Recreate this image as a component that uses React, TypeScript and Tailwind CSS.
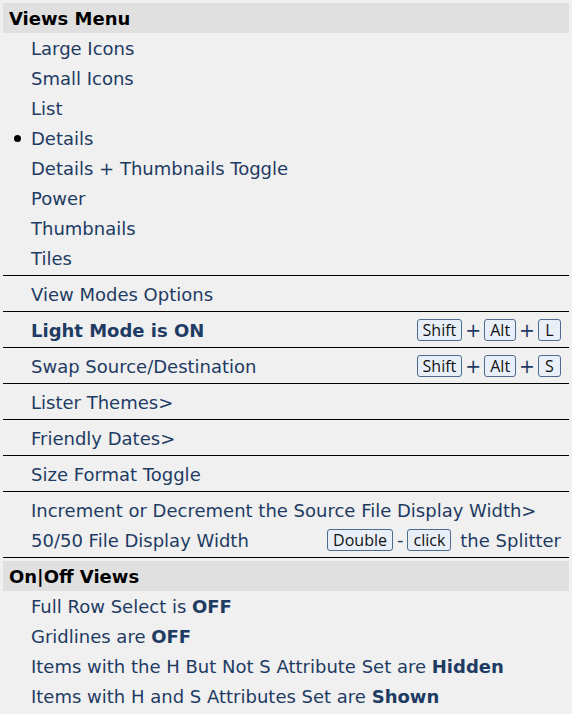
import React from "react";

const text = "text-[#1e3b63]";

function Kbd({ children }: { children: React.ReactNode }) {
  return (
    <span className="inline-flex h-[22px] min-w-[23px] items-center justify-center rounded-[3px] border border-[#4d6b8c] bg-[#e9eff8] px-[5px] text-[16px] leading-none text-[#111] [font-family:'Open_Sans','Noto_Sans',sans-serif]">
      {children}
    </span>
  );
}

function Plus() {
  return <span className="mx-[3px] text-[19px] leading-none">+</span>;
}

function Item({ children, bullet, right }: { children: React.ReactNode; bullet?: boolean; right?: React.ReactNode }) {
  return (
    <div className={`relative flex h-[30px] items-center justify-between pl-[28px] pr-[8px] ${text}`}>
      {bullet && <span className="absolute left-[11px] top-[12px] h-[7px] w-[7px] rounded-full bg-black" />}
      <span>{children}</span>
      {right}
    </div>
  );
}

function Sep() {
  return <div className="mb-[3px] mt-[2px] h-px bg-black" />;
}

function Header({ children }: { children: React.ReactNode }) {
  return (
    <div className="flex h-[30px] items-center bg-[#e0e0e0] pl-[6px] font-bold text-black">{children}</div>
  );
}

export default function App() {
  const views = ["Large Icons", "Small Icons", "List", "Details", "Details + Thumbnails Toggle", "Power", "Thumbnails", "Tiles"];
  return (
    <div className="min-h-screen bg-[#f0f0f0] px-[3px] pt-[3px] text-[18px] [font-family:'DejaVu_Sans',Verdana,sans-serif]">
      <Header>Views Menu</Header>
      {views.map((v) => (
        <Item key={v} bullet={v === "Details"}>
          {v}
        </Item>
      ))}
      <Sep />
      <Item>View Modes Options</Item>
      <Sep />
      <Item
        right={
          <span className="flex items-center">
            <Kbd>Shift</Kbd>
            <Plus />
            <Kbd>Alt</Kbd>
            <Plus />
            <Kbd>L</Kbd>
          </span>
        }
      >
        <b>Light Mode is ON</b>
      </Item>
      <Sep />
      <Item
        right={
          <span className="flex items-center">
            <Kbd>Shift</Kbd>
            <Plus />
            <Kbd>Alt</Kbd>
            <Plus />
            <Kbd>S</Kbd>
          </span>
        }
      >
        Swap Source/Destination
      </Item>
      <Sep />
      <Item>Lister Themes&gt;</Item>
      <Sep />
      <Item>Friendly Dates&gt;</Item>
      <Sep />
      <Item>Size Format Toggle</Item>
      <Sep />
      <Item>Increment or Decrement the Source File Display Width&gt;</Item>
      <Item
        right={
          <span className="flex items-center">
            <Kbd>Double</Kbd>
            <span className="mx-[4px] text-[18px] leading-none">-</span>
            <Kbd>click</Kbd>
            <span className="ml-[9px]">the Splitter</span>
          </span>
        }
      >
        50/50 File Display Width
      </Item>
      <Sep />
      <Header>On|Off Views</Header>
      <Item>
        Full Row Select is <b>OFF</b>
      </Item>
      <Item>
        Gridlines are <b>OFF</b>
      </Item>
      <Item>
        Items with the H But Not S Attribute Set are <b>Hidden</b>
      </Item>
      <Item>
        Items with H and S Attributes Set are <b>Shown</b>
      </Item>
    </div>
  );
}
